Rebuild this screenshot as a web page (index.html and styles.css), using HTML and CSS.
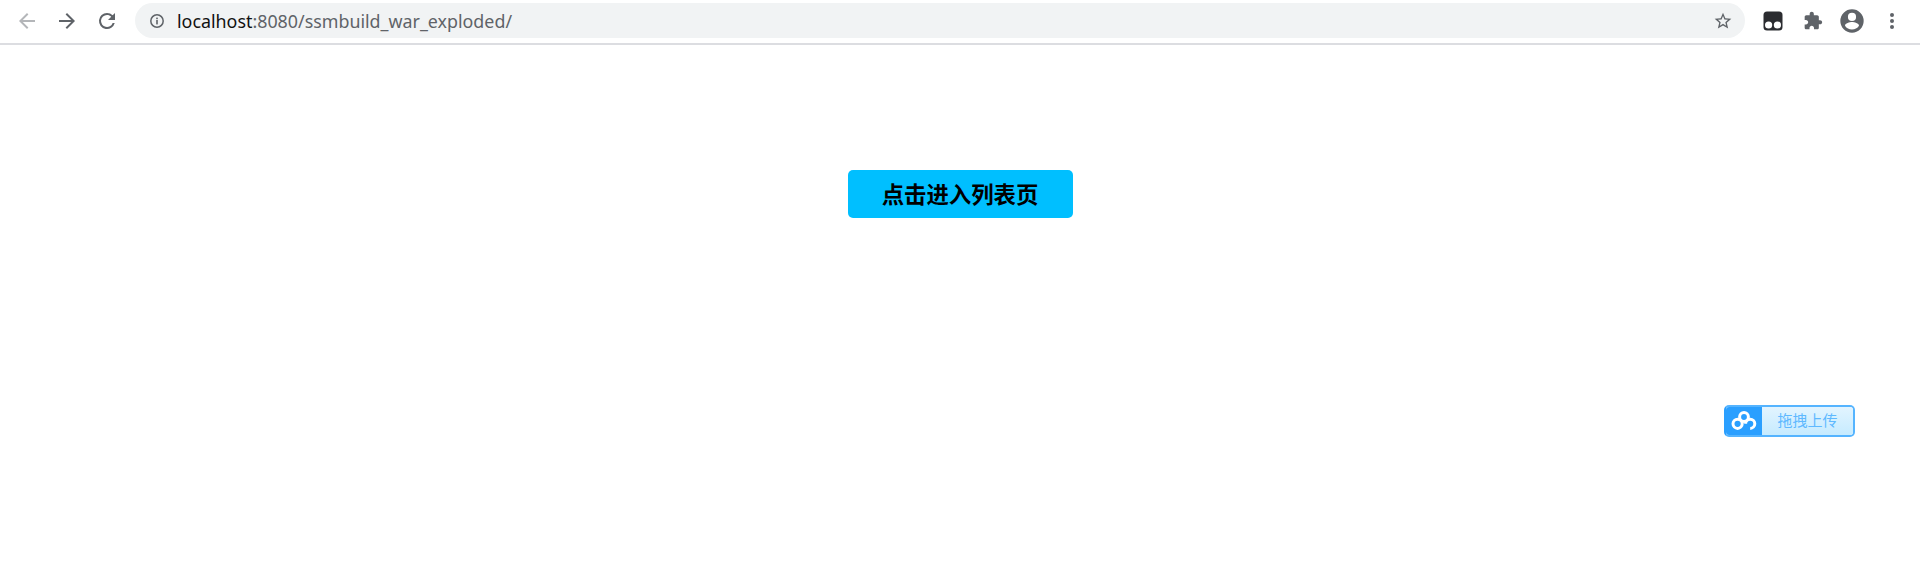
FILE: index.html
```html
<!DOCTYPE html>
<html>
<head>
    <title>localhost:8080/ssmbuild_war_exploded/</title>
    <link rel="stylesheet" href="styles.css">
</head>
<body>
    <div class="toolbar">
        <div class="nav-buttons">
            <svg class="nav-icon" width="24" height="24" viewBox="0 0 24 24"><path d="M20 11H7.8l5.6-5.6L12 4l-8 8 8 8 1.4-1.4L7.8 13H20z" fill="#b4b6b9"/></svg>
            <svg class="nav-icon" width="24" height="24" viewBox="0 0 24 24"><path d="M4 11h12.2l-5.6-5.6L12 4l8 8-8 8-1.4-1.4 5.6-5.6H4z" fill="#5f6368"/></svg>
            <svg class="nav-icon" width="24" height="24" viewBox="0 0 24 24"><path d="M17.65 6.35A7.96 7.96 0 0 0 12 4a8 8 0 1 0 7.73 10h-2.08A6 6 0 1 1 12 6c1.66 0 3.14.69 4.22 1.78L13 11h7V4z" fill="#5f6368"/></svg>
        </div>
        <div class="omnibox">
            <svg class="info-icon" width="16" height="16" viewBox="0 0 16 16"><circle cx="8" cy="8" r="6.2" fill="none" stroke="#5f6368" stroke-width="1.5"/><rect x="7.2" y="7" width="1.6" height="4.4" fill="#5f6368"/><rect x="7.2" y="4.6" width="1.6" height="1.6" fill="#5f6368"/></svg>
            <span class="url"><span class="host">localhost</span>:8080/ssmbuild_war_exploded/</span>
            <svg class="star-icon" width="20" height="20" viewBox="0 0 24 24"><path d="M22 9.24l-7.19-.62L12 2 9.19 8.63 2 9.24l5.46 4.73L5.82 21 12 17.27 18.18 21l-1.63-7.03L22 9.24zM12 15.4l-3.76 2.27 1-4.28-3.32-2.88 4.38-.38L12 6.1l1.71 4.04 4.38.38-3.32 2.88 1 4.28L12 15.4z" fill="#5f6368"/></svg>
        </div>
        <div class="extensions">
            <svg class="ext-icon" width="20" height="20" viewBox="0 0 20 20"><rect x="0.5" y="0.5" width="19" height="19" rx="3.5" fill="#2b2c30"/><circle cx="5.6" cy="14" r="3.6" fill="#fff"/><circle cx="14.4" cy="14" r="3.6" fill="#fff"/></svg>
            <svg class="ext-icon puzzle" width="20" height="20" viewBox="0 0 24 24"><path d="M20.5 11H19V7c0-1.1-.9-2-2-2h-4V3.5C13 2.12 11.88 1 10.5 1S8 2.12 8 3.5V5H4c-1.1 0-1.99.9-1.99 2v3.8H3.5c1.49 0 2.7 1.21 2.7 2.7s-1.21 2.7-2.7 2.7H2V20c0 1.1.9 2 2 2h3.8v-1.5c0-1.49 1.21-2.7 2.7-2.7 1.49 0 2.7 1.21 2.7 2.7V22H17c1.1 0 2-.9 2-2v-4h1.5c1.38 0 2.5-1.12 2.5-2.5S21.88 11 20.5 11z" fill="#5f6368"/></svg>
            <svg class="ext-icon" width="28" height="28" viewBox="0 0 24 24"><path d="M12 2a10 10 0 1 0 0 20 10 10 0 0 0 0-20zm0 3a3.5 3.5 0 1 1 0 7 3.5 3.5 0 0 1 0-7zm0 14.2a7.2 7.2 0 0 1-6-3.22c.03-1.99 4-3.08 6-3.08s5.97 1.09 6 3.08a7.2 7.2 0 0 1-6 3.22z" fill="#5f6368"/></svg>
            <svg class="ext-icon" width="20" height="24" viewBox="0 0 20 24"><circle cx="10" cy="6" r="2" fill="#5f6368"/><circle cx="10" cy="12" r="2" fill="#5f6368"/><circle cx="10" cy="18" r="2" fill="#5f6368"/></svg>
        </div>
    </div>

    <div class="page">
        <a class="enter-btn" href="#">点击进入列表页</a>

        <div class="upload-widget">
            <div class="upload-logo">
                <svg width="26" height="20" viewBox="0 0 26 20"><g fill="none" stroke="#fff" stroke-width="3"><circle cx="13" cy="6" r="4.4"/><circle cx="6.6" cy="12.8" r="4.6"/><path d="M14.6 12.8a4.6 4.6 0 1 1 4.6 4.6"/></g></svg>
            </div>
            <div class="upload-label">拖拽上传</div>
        </div>
    </div>
</body>
</html>
```

FILE: styles.css
```css
body {
    margin: 0;
    height: 565px;
    overflow: hidden;
    background-color: white;
    font-family: "Noto Sans CJK SC", "Liberation Sans", sans-serif;
}

.toolbar {
    display: flex;
    align-items: center;
    height: 41px;
    padding-bottom: 2px;
    background-color: white;
    border-bottom: 2px solid #dcdde1;
    box-sizing: content-box;
}

.nav-buttons {
    display: flex;
    align-items: center;
    gap: 16px;
    width: 135px;
    padding-left: 15px;
    box-sizing: border-box;
}

.omnibox {
    flex: 1;
    display: flex;
    align-items: center;
    height: 35px;
    padding: 0 12px 0 14px;
    background-color: #f1f3f4;
    border-radius: 18px;
}

.info-icon {
    margin-right: 12px;
}

.url {
    flex: 1;
    font-family: "Noto Sans", sans-serif;
    font-size: 17.85px;
    color: #5f6368;
}

.host {
    color: #111;
}

.extensions {
    display: flex;
    align-items: center;
    gap: 16px;
    width: 175px;
    padding-left: 18px;
    box-sizing: border-box;
}

.puzzle {
    margin-left: 4px;
    margin-right: -1px;
}

.page {
    position: relative;
    display: flex;
    justify-content: center;
    padding-top: 125px;
}

.enter-btn {
    display: block;
    width: 225px;
    height: 48px;
    line-height: 46px;
    text-align: center;
    font-size: 22.4px;
    font-weight: bold;
    color: black;
    text-decoration: none;
    background-color: #00bfff;
    border-radius: 5px;
}

.upload-widget {
    position: absolute;
    left: 1724px;
    top: 360px;
    display: flex;
    width: 131px;
    height: 32px;
    box-sizing: border-box;
    border: 2px solid #55b4ff;
    border-left-color: #2a9fff;
    border-radius: 5px;
    overflow: hidden;
}

.upload-logo {
    display: flex;
    align-items: center;
    justify-content: center;
    width: 36px;
    background-color: #2a9fff;
}

.upload-label {
    flex: 1;
    text-align: center;
    line-height: 26px;
    font-size: 15px;
    color: #5fb9ff;
    background-image: linear-gradient(#e2f4ff, #c6ebff);
}
```
